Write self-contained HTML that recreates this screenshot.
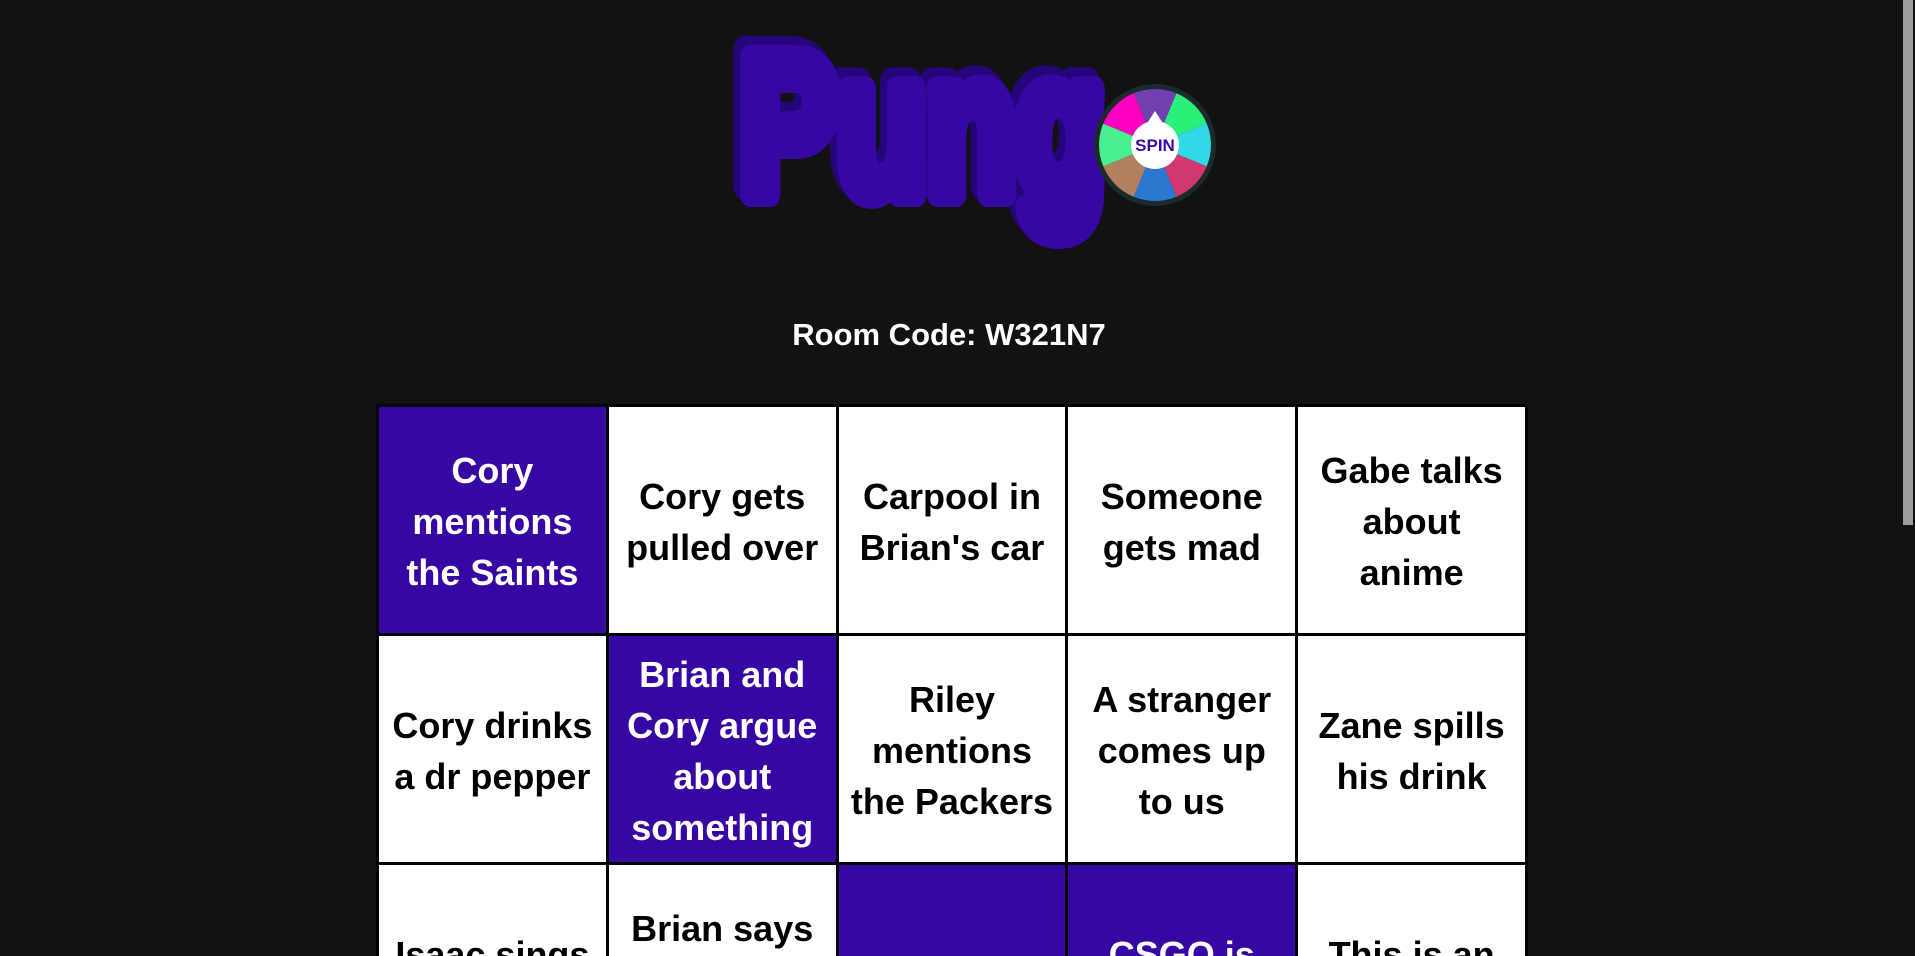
<!DOCTYPE html>
<html><head><meta charset="utf-8"><style>
html,body{margin:0;padding:0;background:#121212;overflow:hidden;width:1915px;height:956px;}
body{position:relative;font-family:"Liberation Sans",sans-serif;}
#logo{position:absolute;left:0;top:0;}
.rc{position:absolute;top:317px;left:0;width:1898px;text-align:center;color:#fff;font-weight:bold;font-size:31px;}
table{position:absolute;left:376px;top:404px;border-collapse:collapse;table-layout:fixed;width:1152px;}
td{height:223px;border:3px solid #000;background:#fff;color:#000;font-weight:bold;font-size:36px;line-height:51px;text-align:center;vertical-align:middle;padding:3px 8px 0;}
td.p{background:#3707a3;color:#fff;}
.sb{position:absolute;left:1903px;top:0;width:10px;height:525px;background:#9c9c9c;}
</style></head><body>
<svg id="logo" width="1915" height="260" viewBox="0 0 1915 260">
 <text x="734" y="186" font-family="Liberation Sans" font-weight="bold" font-size="198" fill="#25067a" stroke="#25067a" stroke-width="28" stroke-linejoin="round" textLength="365" lengthAdjust="spacingAndGlyphs">Pung</text>
 <text x="740" y="194" font-family="Liberation Sans" font-weight="bold" font-size="198" fill="#3707a3" stroke="#3707a3" stroke-width="26" stroke-linejoin="round" textLength="365" lengthAdjust="spacingAndGlyphs">Pung</text>
 <g transform="translate(1155,145)">
  <circle r="61" fill="#1b2a2a"/>
  <g>
   <path d="M0 0 L-21.4 -51.7 A56 56 0 0 1 21.4 -51.7Z" fill="#7040b0"/>
   <path d="M0 0 L21.4 -51.7 A56 56 0 0 1 51.7 -21.4Z" fill="#28f078"/>
   <path d="M0 0 L51.7 -21.4 A56 56 0 0 1 51.7 21.4Z" fill="#30d8e8"/>
   <path d="M0 0 L51.7 21.4 A56 56 0 0 1 21.4 51.7Z" fill="#d03870"/>
   <path d="M0 0 L21.4 51.7 A56 56 0 0 1 -21.4 51.7Z" fill="#2a78d0"/>
   <path d="M0 0 L-21.4 51.7 A56 56 0 0 1 -51.7 21.4Z" fill="#b08060"/>
   <path d="M0 0 L-51.7 21.4 A56 56 0 0 1 -51.7 -21.4Z" fill="#48f090"/>
   <path d="M0 0 L-51.7 -21.4 A56 56 0 0 1 -21.4 -51.7Z" fill="#ff00c0"/>
  </g>
  <path d="M-9 -20 L0 -34 L9 -20Z" fill="#fff"/>
  <circle r="24" fill="#fff"/>
  <text x="0" y="6" text-anchor="middle" font-family="Liberation Sans" font-weight="bold" font-size="17" fill="#3707a3">SPIN</text>
 </g>
</svg>
<div class="rc">Room Code: W321N7</div>
<table>
<tr><td class="p">Cory mentions the Saints</td><td>Cory gets pulled over</td><td>Carpool in Brian's car</td><td>Someone gets mad</td><td>Gabe talks about anime</td></tr>
<tr><td>Cory drinks a dr pepper</td><td class="p">Brian and Cory argue about something</td><td>Riley mentions the Packers</td><td>A stranger comes up to us</td><td>Zane spills his drink</td></tr>
<tr><td>Isaac sings along</td><td>Brian says something dumb</td><td class="p"></td><td class="p">CSGO is mentioned</td><td>This is an event</td></tr>
</table>
<div class="sb"></div>
</body></html>
